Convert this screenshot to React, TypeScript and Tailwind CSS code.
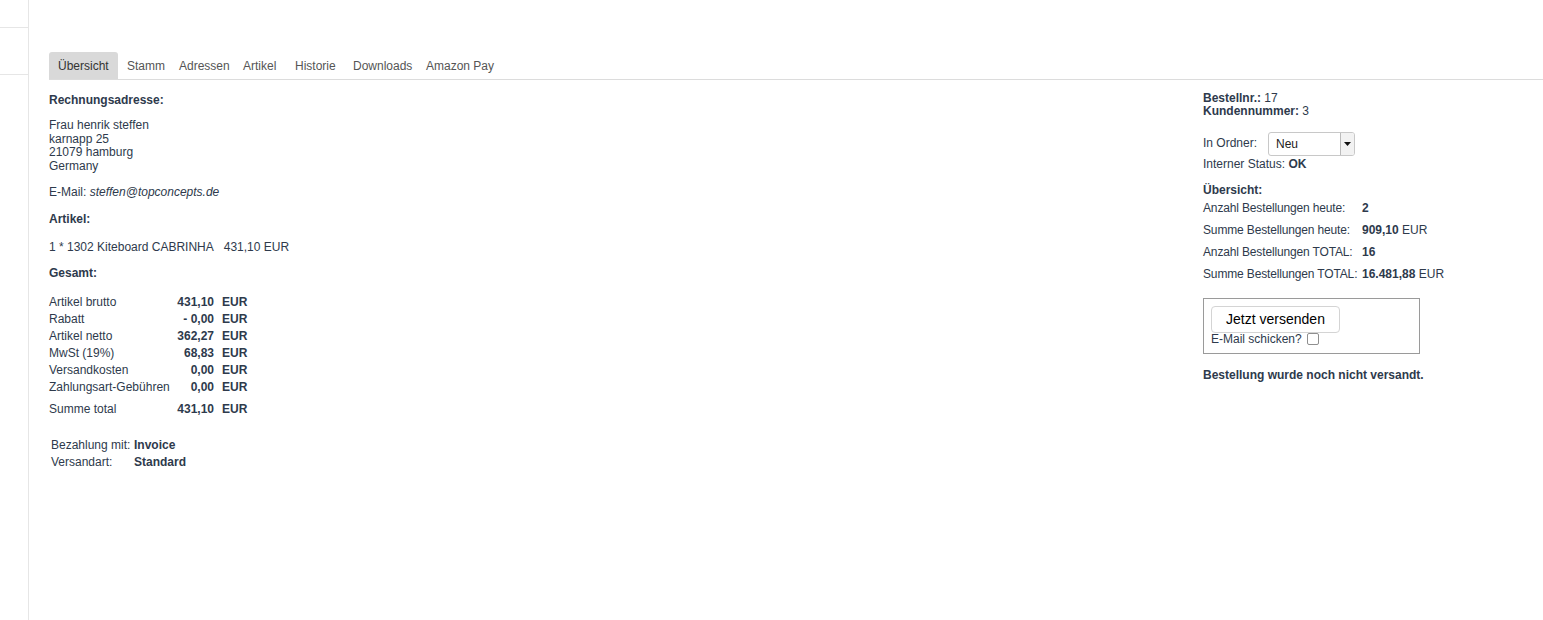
import { Fragment } from "react"

const tabs = [
    { label: "Übersicht", w: "w-[69px]" },
    { label: "Stamm", w: "w-[52px]" },
    { label: "Adressen", w: "w-[64px]" },
    { label: "Artikel", w: "w-[52px]" },
    { label: "Historie", w: "w-[58px]" },
    { label: "Downloads", w: "w-[73px]" },
    { label: "Amazon Pay", w: "w-[74px]" },
]

const totals = [
    { label: "Artikel brutto", value: "431,10" },
    { label: "Rabatt", value: "- 0,00" },
    { label: "Artikel netto", value: "362,27" },
    { label: "MwSt (19%)", value: "68,83" },
    { label: "Versandkosten", value: "0,00" },
    { label: "Zahlungsart-Gebühren", value: "0,00" },
]

const stats = [
    { label: "Anzahl Bestellungen heute:", value: "2", unit: "" },
    { label: "Summe Bestellungen heute:", value: "909,10", unit: " EUR" },
    { label: "Anzahl Bestellungen TOTAL:", value: "16", unit: "" },
    { label: "Summe Bestellungen TOTAL:", value: "16.481,88", unit: " EUR" },
]

function Sidebar() {
    return (
        <aside className="w-[29px] shrink-0 border-r border-[#e6e6e6] min-h-[620px]">
            <div className="h-[28px] border-b border-[#e6e6e6]" />
            <div className="h-[47px] border-b border-[#e6e6e6]" />
        </aside>
    )
}

function Tabs() {
    return (
        <div className="flex items-end h-[28px] border-b border-[#dcdcdc] mt-[52px]">
            {tabs.map((t, i) => (
                <div
                    key={t.label}
                    className={`${t.w} h-[27px] pl-[9px] pt-[7px] leading-[14px] whitespace-nowrap ${
                        i === 0 ? "bg-[#d9d9d9] rounded-t-[3px] text-[#333]" : "text-[#555]"
                    }`}
                >
                    {t.label}
                </div>
            ))}
        </div>
    )
}

function LeftColumn() {
    return (
        <div className="pt-[14px]">
            <p className="font-bold mb-[12px]">Rechnungsadresse:</p>
            <p className="mb-[13px]">
                Frau henrik steffen<br />
                karnapp 25<br />
                21079 hamburg<br />
                Germany
            </p>
            <p className="mb-[14px]">
                E-Mail: <i>steffen@topconcepts.de</i>
            </p>
            <p className="font-bold mb-[14px]">Artikel:</p>
            <p className="mb-[13px]">1 * 1302 Kiteboard CABRINHA&nbsp;&nbsp; 431,10 EUR</p>
            <p className="font-bold">Gesamt:</p>

            {/* Summen */}
            <div className="grid grid-cols-[127px_38px_auto] mt-[13px]">
                {totals.map((r) => (
                    <Fragment key={r.label}>
                        <span className="h-[17px] leading-[17px] whitespace-nowrap">{r.label}</span>
                        <span className="h-[17px] leading-[17px] text-right font-bold whitespace-nowrap">{r.value}</span>
                        <span className="h-[17px] leading-[17px] pl-[8px] font-bold">EUR</span>
                    </Fragment>
                ))}
                <span className="h-[22px] pt-[5px] leading-[17px]">Summe total</span>
                <span className="h-[22px] pt-[5px] leading-[17px] text-right font-bold">431,10</span>
                <span className="h-[22px] pt-[5px] leading-[17px] pl-[8px] font-bold">EUR</span>
            </div>

            <div className="grid grid-cols-[83px_auto] mt-[19px] ml-[2px]">
                <span className="h-[17px] leading-[17px]">Bezahlung mit:</span>
                <span className="h-[17px] leading-[17px] font-bold">Invoice</span>
                <span className="h-[17px] leading-[17px]">Versandart:</span>
                <span className="h-[17px] leading-[17px] font-bold">Standard</span>
            </div>
        </div>
    )
}

function RightColumn() {
    return (
        <div className="w-[340px] shrink-0 pt-[12px]">
            <p>
                <b>Bestellnr.:</b> 17<br />
                <b>Kundennummer:</b> 3
            </p>

            <div className="flex items-center mt-[13px] h-[24px]">
                <span className="w-[65px]">In Ordner:</span>
                <div className="flex w-[87px] h-[24px] border border-[#c8c8c8] rounded-[3px] bg-white overflow-hidden">
                    <span className="flex-1 pl-[7px] leading-[22px] text-[#222]">Neu</span>
                    <span className="w-[14px] border-l border-[#bbb] bg-[#f2f2f2] flex items-center justify-center">
                        <svg width="7" height="4" viewBox="0 0 7 4">
                            <path d="M0 0h7L3.5 4z" fill="#111" />
                        </svg>
                    </span>
                </div>
            </div>
            <p className="mt-[2px]">
                Interner Status: <b>OK</b>
            </p>

            <p className="font-bold mt-[13px]">Übersicht:</p>
            <div className="grid grid-cols-[159px_1fr] -mt-[1px]">
                {stats.map((s) => (
                    <Fragment key={s.label}>
                        <span className="h-[22px] leading-[22px] whitespace-nowrap tracking-[-0.15px]">{s.label}</span>
                        <span className="h-[22px] leading-[22px] whitespace-nowrap">
                            <b>{s.value}</b>
                            {s.unit}
                        </span>
                    </Fragment>
                ))}
            </div>

            <div className="w-[217px] h-[56px] border border-[#9a9a9a] mt-[13px] px-[7px] pt-[7px]">
                <button className="w-[129px] h-[27px] border border-[#d4d4d4] rounded-[4px] bg-white text-[14px] text-black leading-[25px]">
                    Jetzt versenden
                </button>
                <div className="flex items-center gap-[5px] -mt-[1px] leading-[14px]">
                    <span>E-Mail schicken?</span>
                    <span className="w-[12px] h-[12px] border border-[#8f8f8f] rounded-[2px] bg-white" />
                </div>
            </div>

            <p className="font-bold mt-[15px]">Bestellung wurde noch nicht versandt.</p>
        </div>
    )
}

export default function App() {
    return (
        <div
            className="flex w-[1543px] h-[620px] bg-white text-[12px] leading-[13.4px] text-[#2e3a4c] overflow-hidden"
            style={{ fontFamily: '"Liberation Sans", Arial, sans-serif' }}
        >
            <Sidebar />
            <main className="flex-1 pl-[20px]">
                <Tabs />
                <div className="flex justify-between">
                    <LeftColumn />
                    <RightColumn />
                </div>
            </main>
        </div>
    )
}
